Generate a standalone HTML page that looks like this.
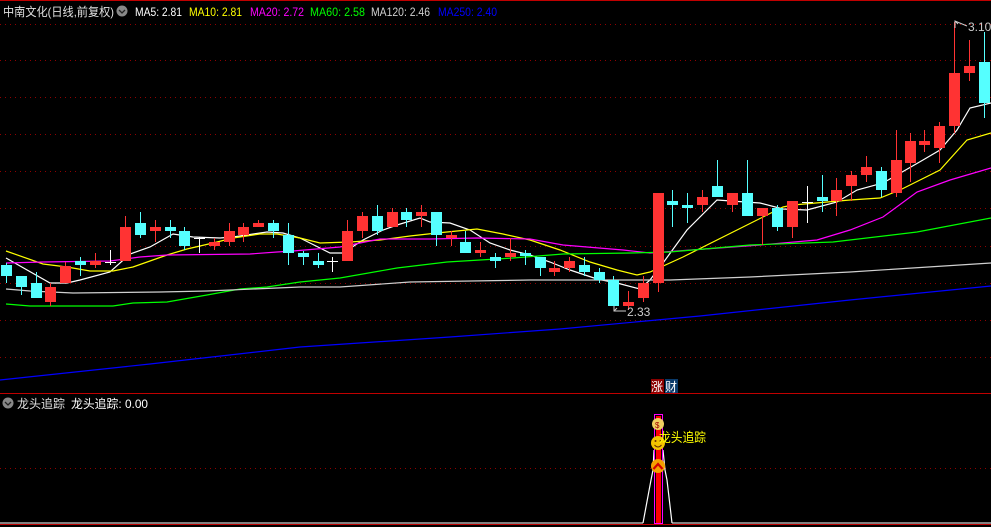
<!DOCTYPE html>
<html><head><meta charset="utf-8">
<style>
html,body{margin:0;padding:0;background:#000;width:991px;height:527px;overflow:hidden}
svg{display:block}
text{font-family:"Liberation Sans","Noto Sans CJK SC",sans-serif}
</style></head>
<body>
<svg id="s" width="991" height="527" viewBox="0 0 991 527" xmlns="http://www.w3.org/2000/svg">
<rect width="991" height="527" fill="#000"/>
<line x1="0" y1="0.5" x2="991" y2="0.5" stroke="#c00000"/>
<g id="grid" stroke="#900000" stroke-dasharray="1,4"></g>
<line x1="0" y1="393.5" x2="991" y2="393.5" stroke="#c00000"/>
<line x1="0" y1="524.5" x2="991" y2="524.5" stroke="#c00000"/>
<line x1="0" y1="468.5" x2="991" y2="468.5" stroke="#900000" stroke-dasharray="1,4"/>
<g id="lines" fill="none" stroke-width="1.2"></g>
<g id="candles"></g>
<!-- header -->
<text x="3" y="16" font-size="12" fill="#e0e0e0" textLength="111" lengthAdjust="spacingAndGlyphs">中南文化(日线,前复权)</text>
<circle cx="122" cy="11" r="5.5" fill="#888"/>
<path d="M119 10 L122 13 L125 10" stroke="#222" stroke-width="1.3" fill="none"/>
<text x="135" y="16" font-size="12" fill="#fff" textLength="47" lengthAdjust="spacingAndGlyphs">MA5: 2.81</text>
<text x="189" y="16" font-size="12" fill="#ffff00" textLength="53" lengthAdjust="spacingAndGlyphs">MA10: 2.81</text>
<text x="250" y="16" font-size="12" fill="#ff00ff" textLength="54" lengthAdjust="spacingAndGlyphs">MA20: 2.72</text>
<text x="310" y="16" font-size="12" fill="#00ff00" textLength="55" lengthAdjust="spacingAndGlyphs">MA60: 2.58</text>
<text x="371" y="16" font-size="12" fill="#d0d0d0" textLength="59" lengthAdjust="spacingAndGlyphs">MA120: 2.46</text>
<text x="438" y="16" font-size="12" fill="#0000ff" textLength="59" lengthAdjust="spacingAndGlyphs">MA250: 2.40</text>
<!-- price labels -->
<path d="M614 306 L614 311 L626 311 M614 311 L617 308" stroke="#ccc" fill="none"/>
<text x="627" y="316" font-size="12" fill="#ccc">2.33</text>
<path d="M955 28 L955 21 L967 26 M955 21 L958 24" stroke="#ccc" fill="none"/>
<text x="968" y="31" font-size="12" fill="#ccc">3.10</text>
<!-- 涨财 -->
<rect x="651" y="379" width="13" height="14" fill="#8b0000"/>
<rect x="665" y="379" width="13" height="14" fill="#0a3a6a"/>
<text x="651" y="391" font-size="12" fill="#fff">涨</text>
<text x="665" y="391" font-size="12" fill="#fff">财</text>
<!-- bottom header -->
<circle cx="8" cy="403" r="5.5" fill="#888"/>
<path d="M5 402 L8 405 L11 402" stroke="#222" stroke-width="1.3" fill="none"/>
<text x="17" y="408" font-size="12" fill="#e0e0e0" textLength="48" lengthAdjust="spacingAndGlyphs">龙头追踪</text>
<text x="71" y="408" font-size="12" fill="#fff" textLength="77" lengthAdjust="spacingAndGlyphs">龙头追踪: 0.00</text>
<!-- indicator -->
<polyline points="643,523 651,480 653,470 654,450" stroke="#fff" fill="none" stroke-width="1.2"/>
<polyline points="663,450 665,470 667,480 672,523" stroke="#fff" fill="none" stroke-width="1.2"/>
<line x1="0" y1="523" x2="643" y2="523" stroke="#fff"/>
<line x1="672" y1="523" x2="991" y2="523" stroke="#fff"/>
<rect x="654.5" y="414.5" width="8" height="109" fill="none" stroke="#ff00ff"/>
<rect x="656" y="416" width="5" height="107" fill="#ff0000"/>
<circle cx="658" cy="424" r="6" fill="#f0d060"/>
<text x="655" y="428" font-size="8" fill="#a00000">$</text>
<circle cx="658" cy="443" r="7" fill="#f4c400"/>
<circle cx="655.5" cy="441" r="1" fill="#6a3000"/><circle cx="660.5" cy="441" r="1" fill="#6a3000"/>
<path d="M654.5 445 Q658 449 661.5 445" stroke="#6a3000" fill="none"/>
<circle cx="658" cy="466" r="7" fill="#f4a000"/>
<path d="M653.5 469 L658 464 L662.5 469" stroke="#d00000" stroke-width="2.2" fill="none"/>
<text x="659" y="442" font-size="13" fill="#ffff00" textLength="47" lengthAdjust="spacingAndGlyphs">龙头追踪</text>
</svg>
<script>
var NS="http://www.w3.org/2000/svg";
function el(p,t,a){var e=document.createElementNS(NS,t);for(var k in a)e.setAttribute(k,a[k]);p.appendChild(e);return e;}
var g=document.getElementById('grid');
[24,60,97,134,171,208,246,283,320,357].forEach(function(y){el(g,'line',{x1:0,y1:y+.5,x2:991,y2:y+.5});});
var L=document.getElementById('lines');
var lines={
"#ffffff":[[6,258],[50,283],[67,283],[80,280],[110,272],[130,254],[150,247],[173,234],[193,237],[220,238],[233,237],[267,232],[283,233],[300,238],[330,253],[343,253],[363,240],[383,230],[397,225],[420,218],[430,222],[450,223],[470,230],[490,243],[510,250],[530,255],[550,262],[570,270],[597,279],[617,283],[640,289],[650,280],[663,263],[687,230],[717,200],[760,203],[783,209],[807,210],[837,202],[857,190],[883,183],[923,160],[940,150],[957,130],[970,108],[991,103]],
"#ffff00":[[6,251],[43,264],[67,267],[90,271],[113,271],[133,267],[167,255],[187,249],[213,243],[233,238],[260,234],[277,234],[300,238],[320,243],[350,242],[380,240],[410,236],[437,233],[477,229],[503,234],[530,240],[560,250],[590,262],[617,270],[637,275],[650,272],[683,257],[783,207],[793,205],[850,200],[880,198],[900,190],[940,170],[967,140],[991,133]],
"#ff00ff":[[6,263],[43,262],[110,261],[140,257],[167,255],[250,254],[277,252],[293,251],[340,247],[380,239],[430,239],[477,238],[530,239],[563,245],[623,250],[650,253],[760,245],[817,240],[850,230],[883,217],[917,192],[950,180],[991,168]],
"#00ff00":[[6,304],[30,306],[113,306],[133,303],[167,302],[207,295],[240,289],[267,287],[300,282],[340,278],[397,268],[447,262],[480,260],[513,258],[563,254],[630,253],[670,252],[750,245],[833,242],[917,232],[991,218]],
"#d0d0d0":[[6,289],[30,291],[73,293],[160,292],[207,291],[300,287],[340,287],[410,282],[530,280],[670,280],[750,277],[850,272],[991,263]],
"#0000ff":[[0,380],[150,364],[300,347],[450,337],[560,329],[700,316],[850,300],[991,286]]
};
for(var c in lines){el(L,'polyline',{points:lines[c].map(function(p){return p.join(',')}).join(' '),stroke:c});}
var C=document.getElementById('candles');
var d=[
[6,'c',265,276,263,283],[21,'c',276,287,276,295],[36,'c',283,298,272,298],[50,'r',287,302,283,306],[65,'r',266,283,262,283],
[80,'c',261,265,257,276],[95,'r',261,265,253,268],[110,'w',262,262,250,265],[125,'r',227,261,216,261],[140,'c',223,235,212,238],
[155,'r',227,231,220,242],[170,'c',227,231,220,238],[184,'c',231,246,227,250],[199,'w',238,238,237,253],[214,'r',242,246,238,250],
[229,'r',231,242,223,246],[243,'r',227,235,223,242],[258,'r',223,227,220,227],[273,'c',223,231,220,238],[288,'c',235,253,223,265],
[303,'c',253,257,251,265],[318,'c',261,265,253,268],[332,'w',261,261,257,272],[347,'r',231,261,220,261],[362,'r',216,231,212,238],
[377,'c',216,231,205,235],[392,'r',212,227,208,227],[406,'c',212,220,208,227],[421,'r',212,216,205,227],[436,'c',212,235,212,246],
[451,'r',235,238,231,246],[465,'c',242,253,231,253],[480,'r',250,253,242,257],[495,'c',257,261,253,268],[510,'r',253,257,238,261],
[525,'c',253,256,250,265],[540,'c',257,268,257,276],[554,'r',268,272,261,276],[569,'r',261,268,257,272],[584,'c',265,272,257,276],
[599,'c',272,280,268,283],[613,'c',280,306,276,306],[628,'r',302,306,291,310],[643,'r',283,298,276,302],[658,'r',193,283,193,292],
[672,'c',201,205,190,227],[687,'c',205,208,193,223],[702,'r',197,205,190,212],[717,'c',186,197,160,197],[732,'r',193,205,193,212],
[747,'c',193,216,160,216],[762,'r',208,216,208,245],[777,'c',208,227,205,231],[792,'r',201,227,201,238],[807,'w',202,202,186,223],
[822,'c',197,201,175,212],[836,'r',190,201,178,216],[851,'r',175,186,171,201],[866,'r',167,175,156,182],[881,'c',171,190,167,197],
[896,'r',160,193,130,197],[910,'r',141,163,133,182],[924,'r',141,145,130,152],[939,'r',126,148,122,163],[954,'r',73,126,22,133],
[969,'r',66,73,40,81],[984,'c',62,103,32,118]];
d.forEach(function(k){
 var col=k[1]=='r'?'#ff3333':(k[1]=='c'?'#55ffff':'#ffffff');
 el(C,'line',{x1:k[0]+.5,y1:k[4],x2:k[0]+.5,y2:k[5],stroke:col});
 if(k[1]=='w'){el(C,'line',{x1:k[0]-5,y1:k[2]+.5,x2:k[0]+6,y2:k[2]+.5,stroke:col});}
 else el(C,'rect',{x:k[0]-5,y:k[2],width:11,height:Math.max(3,k[3]-k[2]),fill:col});
});
</script>
</body></html>
